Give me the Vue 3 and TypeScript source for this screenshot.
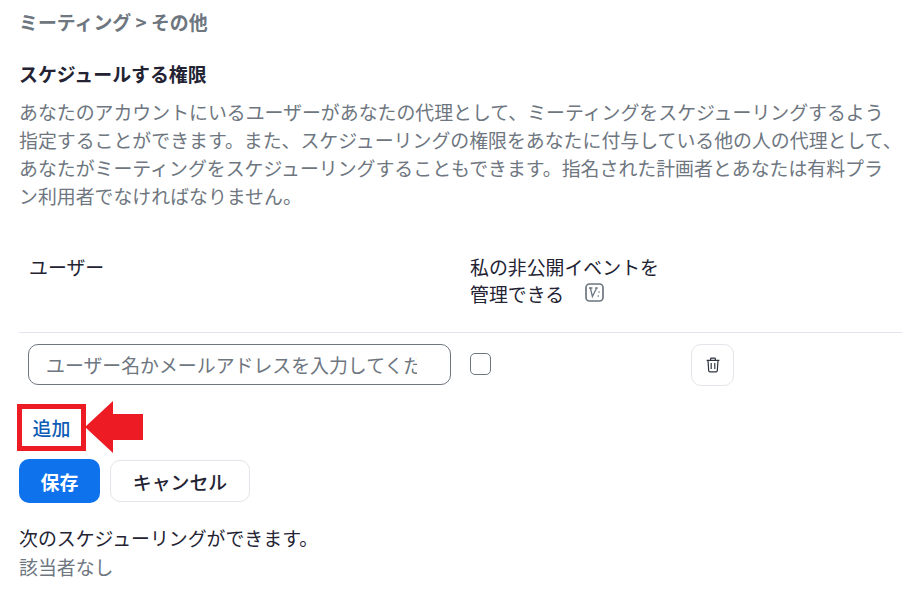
<script setup lang="ts">
const lines: string[] = [
  'あなたのアカウントにいるユーザーがあなたの代理として、ミーティングをスケジューリングするよう',
  '指定することができます。また、スケジューリングの権限をあなたに付与している他の人の代理として、',
  'あなたがミーティングをスケジューリングすることもできます。指名された計画者とあなたは有料プラ',
  'ン利用者でなければなりません。',
]
</script>

<template>
  <main class="page">
    <div class="crumb">ミーティング &gt; その他</div>
    <h2 class="title">スケジュールする権限</h2>
    <p class="desc"><span v-for="l in lines" :key="l" class="line">{{ l }}</span></p>

    <div class="head">
      <div class="col-user">ユーザー</div>
      <div class="col-manage">
        <div>私の非公開イベントを</div>
        <div class="manage-second">
          管理できる
          <svg class="vicon" width="19" height="19" viewBox="0 0 19 19" aria-hidden="true">
            <rect x="1" y="1" width="17" height="17" rx="3.5" fill="none" stroke="#6e7680" stroke-width="1.7" />
            <path d="M4 5h3.4M5.4 5l2 8.6L11.6 5M10.2 5h2.6M13.4 9h1.2M12.6 13h1.2" fill="none" stroke="#6e7680" stroke-width="1.3" />
          </svg>
        </div>
      </div>
    </div>

    <div class="row">
      <div class="input"><span class="placeholder">ユーザー名かメールアドレスを入力してください</span></div>
      <div class="check"></div>
      <button class="trash" type="button" aria-label="削除">
        <svg width="16" height="16" viewBox="0 0 16 16" aria-hidden="true">
          <path d="M1.6 3.4h12.8M5.6 3.2V2c0-.5.3-.8.8-.8h3.2c.5 0 .8.3.8.8v1.2M3 3.6l.7 10c.1.8.5 1.2 1.2 1.2h6.2c.7 0 1.1-.4 1.2-1.2l.7-10M6.2 6v6M9.8 6v6" fill="none" stroke="#2f3640" stroke-width="1.2" />
        </svg>
      </button>
    </div>

    <div class="add-row">
      <div class="add-box">追加</div>
      <svg class="arrow" width="60" height="52" viewBox="0 0 60 52" aria-hidden="true">
        <path d="M0 26 28 0V13H58V39H28V52Z" fill="#ed1c24" />
      </svg>
    </div>

    <div class="actions">
      <button class="save" type="button">保存</button>
      <button class="cancel" type="button">キャンセル</button>
    </div>

    <div class="note">次のスケジューリングができます。</div>
    <div class="none">該当者なし</div>
  </main>
</template>

<style scoped>
.page {
  box-sizing: border-box;
  width: 913px;
  height: 604px;
  padding: 11px 0 0 19px;
  overflow: hidden;
  background: #fff;
  font-family: "Noto Sans CJK JP", "Noto Sans", sans-serif;
  font-size: 18.9px;
  color: #232333;
}
.crumb { font-weight: 700; line-height: 22px; color: #6e7680; }
.title { margin: 30px 0 0; font-size: 18.9px; font-weight: 700; line-height: 22px; color: #232333; }
.desc { margin: 13px 0 0; line-height: 28px; color: #6e7680; white-space: nowrap; }
.line { display: block; }
.head { display: flex; margin-top: 41px; padding-top: 2px; width: 883px; height: 79px; border-bottom: 1px solid #e4e2ee; }
.col-user { width: 451px; padding-left: 10px; box-sizing: border-box; line-height: 27px; }
.col-manage { line-height: 27px; white-space: nowrap; }
.manage-second { display: flex; align-items: center; height: 27px; }
.vicon { margin-left: 21px; margin-top: -3px; }
.row { display: flex; align-items: flex-start; margin-top: 11px; height: 60px; }
.input {
  box-sizing: border-box;
  width: 423px; height: 41px; margin-left: 9px;
  padding: 0 17px; border: 1px solid #6e7680; border-radius: 10px;
  line-height: 39px; color: #6e7680;
}
.placeholder { display: block; width: 371px; overflow: hidden; white-space: nowrap; }
.check {
  box-sizing: border-box;
  width: 21px; height: 22px; margin: 9px 0 0 19px;
  border: 1px solid #6e7680; border-radius: 5px;
}
.trash {
  display: flex; align-items: center; justify-content: center;
  box-sizing: border-box;
  width: 43px; height: 42px; margin-left: 200px; padding: 0;
  background: #fff; border: 1px solid #e4e4ea; border-radius: 10px;
}
.add-row { position: relative; height: 55px; }
.add-box {
  box-sizing: border-box;
  width: 69px; height: 47px; margin-left: -2px;
  border: 5px solid #ed1c24;
  color: #0e5cb5; font-weight: 500; line-height: 37px; text-align: center;
}
.arrow { position: absolute; left: 66px; top: -3px; }
.actions { display: flex; align-items: center; gap: 10px; }
.save {
  width: 81px; height: 44px; padding: 0; border: 0; border-radius: 10px;
  background: #0e72ed; color: #fff; font: 700 18.9px "Noto Sans CJK JP", sans-serif;
}
.cancel {
  box-sizing: border-box;
  width: 140px; height: 42px; padding: 0; border: 1px solid #e4e4ea; border-radius: 10px;
  background: #fff; color: #232333; font: 500 18.9px "Noto Sans CJK JP", sans-serif;
}
.note { margin-top: 21px; line-height: 28px; }
.none { line-height: 28px; color: #6e7680; margin-top: 1px; }
</style>
